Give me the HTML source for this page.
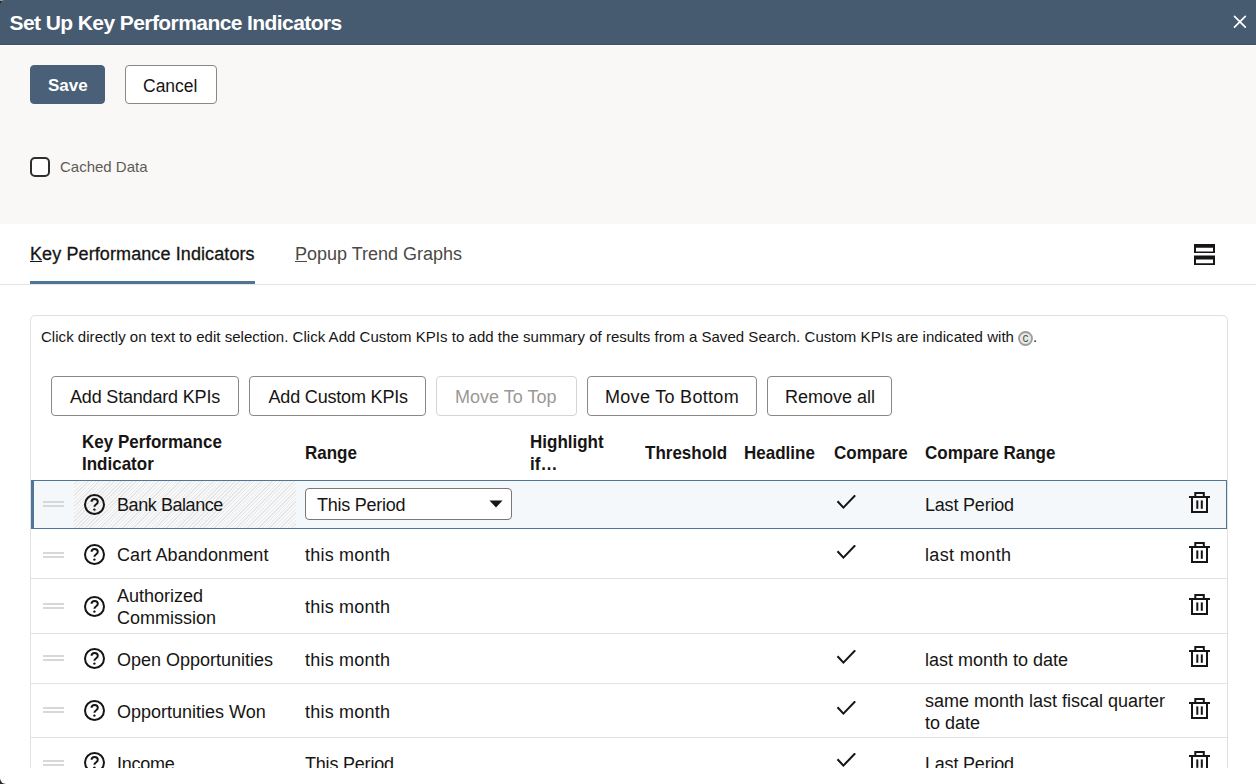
<!DOCTYPE html>
<html><head><meta charset="utf-8">
<style>
html,body{margin:0;padding:0;}
body{width:1256px;height:784px;overflow:hidden;position:relative;background:#fff;font-family:"Liberation Sans",sans-serif;color:#161513;}
.a{position:absolute;}
.t{position:absolute;white-space:nowrap;line-height:22px;font-size:18px;}
.b{font-weight:700;}
#hdr{left:0;top:0;width:1256px;height:44px;background:#465a70;}
#top{left:0;top:46px;width:1256px;height:178px;background:#f9f8f6;}
.btn{position:absolute;box-sizing:border-box;border:1px solid #8a8886;border-radius:4px;background:#fff;}
.dis{border-color:#d6d4d2;}
.hl{position:absolute;left:30px;height:1px;background:#e2e2e2;}
.handle{position:absolute;left:43px;width:21px;height:6px;border-top:2px solid #d8d8d8;border-bottom:2px solid #d8d8d8;box-sizing:border-box;}
.q{position:absolute;left:84px;width:21px;height:21px;}
.tr{position:absolute;left:1189px;width:22px;height:22px;}
.ck{position:absolute;left:834px;width:24px;height:16px;}
</style></head>
<body>
<div class="a" style="left:0;top:0;width:7px;height:7px;background:linear-gradient(#a29c92 0,#a29c92 1px,#1f1d1b 1px,#1f1d1b 4px,#6c7f92 4px);"></div>
<div id="hdr" class="a" style="border-top-left-radius:5px;"></div>
<div class="t b" style="left:9.5px;top:11px;font-size:21px;line-height:24px;letter-spacing:-0.58px;color:#fff;">Set Up Key Performance Indicators</div>
<svg class="a" style="left:1232px;top:14px" width="16" height="16" viewBox="0 0 16 16"><path d="M2.5 2.4L13.3 13.2M13.3 2.4L2.5 13.2" stroke="#fff" stroke-width="1.7" stroke-linecap="round"/></svg>

<div id="top" class="a"></div>
<div class="a" style="left:0;top:44px;width:1256px;height:1px;background:#3b4f66;"></div>
<div class="a" style="left:0;top:45px;width:1256px;height:1px;background:#fff;"></div>
<div class="btn" style="left:30px;top:65px;width:75px;height:39px;background:#4a6079;border-color:#4a6079;"></div>
<div class="t b" style="left:48px;top:75px;font-size:17px;color:#fff;">Save</div>
<div class="btn" style="left:125px;top:65px;width:92px;height:39px;"></div>
<div class="t" style="left:143px;top:75px;font-size:17.5px;">Cancel</div>

<div class="a" style="left:30px;top:157px;width:20px;height:20px;box-sizing:border-box;border:2px solid #2e2e2e;border-radius:5px;background:#fff;"></div>
<div class="t" style="left:60px;top:157px;font-size:15px;line-height:20px;color:#5f5b57;">Cached Data</div>

<!-- tabs -->
<div class="t" style="left:30px;top:243px;letter-spacing:0.1px;-webkit-text-stroke:0.3px #161513;"><u style="text-decoration-thickness:1px;text-underline-offset:1px">K</u>ey Performance Indicators</div>
<div class="a" style="left:30px;top:281px;width:225px;height:3px;background:#4f7494;"></div>
<div class="t" style="left:295px;top:243px;color:#4b4845;"><u style="text-decoration-thickness:1px;text-underline-offset:1px">P</u>opup Trend Graphs</div>
<div class="a" style="left:0;top:284px;width:1256px;height:1px;background:#e4e4e4;"></div>
<svg class="a" style="left:1194px;top:244px" width="21" height="21" viewBox="0 0 21 21">
<path d="M0 0h21v9H0z M2 3.8v3.8h17V3.8z" fill="#161513" fill-rule="evenodd"/>
<path d="M0 11.5h21v9.5H0z M2 15.5v3.7h17v-3.7z" fill="#161513" fill-rule="evenodd"/>
</svg>

<!-- panel -->
<div class="a" style="left:30px;top:315px;width:1198px;height:470px;box-sizing:border-box;border:1px solid #e1e1e1;border-radius:5px;"></div>
<div class="t" style="left:41px;top:327px;font-size:15px;line-height:20px;letter-spacing:0.035px;">Click directly on text to edit selection. Click Add Custom KPIs to add the summary of results from a Saved Search. Custom KPIs are indicated with</div>
<svg class="a" style="left:1018px;top:331px" width="15" height="15" viewBox="0 0 15 15"><circle cx="7.5" cy="7.5" r="6.5" fill="#e9e9e9" stroke="#9c9c9c" stroke-width="1.8"/><text x="7.5" y="11.4" font-family="Liberation Sans" font-size="12" font-weight="400" text-anchor="middle" fill="#4f5548">c</text></svg>
<div class="t" style="left:1033px;top:327px;font-size:15px;line-height:20px;">.</div>

<div class="btn" style="left:51px;top:376px;width:188px;height:40px;"></div>
<div class="t" style="left:70px;top:386px;letter-spacing:-0.18px;">Add Standard KPIs</div>
<div class="btn" style="left:249px;top:376px;width:177px;height:40px;"></div>
<div class="t" style="left:268.5px;top:386px;letter-spacing:-0.18px;">Add Custom KPIs</div>
<div class="btn dis" style="left:436px;top:376px;width:141px;height:40px;"></div>
<div class="t" style="left:455px;top:386px;color:#9b9896;">Move To Top</div>
<div class="btn" style="left:587px;top:376px;width:170px;height:40px;"></div>
<div class="t" style="left:605px;top:386px;letter-spacing:0.3px;">Move To Bottom</div>
<div class="btn" style="left:767px;top:376px;width:125px;height:40px;"></div>
<div class="t" style="left:785px;top:386px;">Remove all</div>

<!-- table header -->
<div class="t b" style="left:82px;top:433px;font-size:17px;line-height:20.4px;transform:scaleY(1.08);transform-origin:0 16.1px;">Key Performance<br>Indicator</div>
<div class="t b" style="left:305px;top:442.5px;font-size:17px;transform:scaleY(1.08);transform-origin:0 16.9px;">Range</div>
<div class="t b" style="left:530px;top:433px;font-size:17px;line-height:20.4px;transform:scaleY(1.08);transform-origin:0 16.1px;">Highlight<br>if…</div>
<div class="t b" style="left:645px;top:442.5px;font-size:17px;transform:scaleY(1.08);transform-origin:0 16.9px;">Threshold</div>
<div class="t b" style="left:744px;top:442.5px;font-size:17px;transform:scaleY(1.08);transform-origin:0 16.9px;">Headline</div>
<div class="t b" style="left:834px;top:442.5px;font-size:17px;transform:scaleY(1.08);transform-origin:0 16.9px;">Compare</div>
<div class="t b" style="left:925px;top:442.5px;font-size:17px;transform:scaleY(1.08);transform-origin:0 16.9px;">Compare Range</div>

<!-- rows -->
<div class="a" style="left:31px;top:480px;width:1196px;height:49px;box-sizing:border-box;border:1px solid #4f7597;border-left:3px solid #4f7597;background:#f5f8fb;"></div>
<div class="a" style="left:74px;top:481px;width:222px;height:47px;background:repeating-linear-gradient(-45deg,#e7e7e7 0px,#e7e7e7 1px,#f7f8f9 1px,#f7f8f9 2.6px);"></div>
<div class="a" style="left:305px;top:488px;width:207px;height:32px;box-sizing:border-box;border:1px solid #7a7875;border-radius:4px;background:#fff;"></div>
<div class="t" style="left:317px;top:494px;letter-spacing:-0.25px;">This Period</div>
<svg class="a" style="left:489px;top:500px" width="14" height="8" viewBox="0 0 14 8"><path d="M0.5 0.5h13L7 7.5z" fill="#161513"/></svg>

<div class="hl" style="top:578px;width:1197px;"></div>
<div class="hl" style="top:633px;width:1197px;"></div>
<div class="hl" style="top:683px;width:1197px;"></div>
<div class="hl" style="top:737px;width:1197px;"></div>

<div class="handle" style="top:501px;"></div>
<div class="handle" style="top:552px;"></div>
<div class="handle" style="top:603px;"></div>
<div class="handle" style="top:655px;"></div>
<div class="handle" style="top:707px;"></div>
<div class="handle" style="top:760px;"></div>

<!-- KPI names -->
<div class="t" style="left:117px;top:494px;letter-spacing:-0.43px;">Bank Balance</div>
<div class="t" style="left:117px;top:544px;letter-spacing:0.09px;">Cart Abandonment</div>
<div class="t" style="left:117px;top:585px;">Authorized<br>Commission</div>
<div class="t" style="left:117px;top:649px;">Open Opportunities</div>
<div class="t" style="left:117px;top:701px;">Opportunities Won</div>
<div class="t" style="left:117px;top:753px;letter-spacing:-0.25px;">Income</div>

<div class="t" style="left:305px;top:544px;letter-spacing:0.22px;">this month</div>
<div class="t" style="left:305px;top:596px;letter-spacing:0.22px;">this month</div>
<div class="t" style="left:305px;top:649px;letter-spacing:0.22px;">this month</div>
<div class="t" style="left:305px;top:701px;letter-spacing:0.22px;">this month</div>
<div class="t" style="left:305px;top:753px;letter-spacing:-0.2px;">This Period</div>

<div class="t" style="left:925px;top:494px;letter-spacing:-0.2px;">Last Period</div>
<div class="t" style="left:925px;top:544px;letter-spacing:0.33px;">last month</div>
<div class="t" style="left:925px;top:649px;">last month to date</div>
<div class="t" style="left:925px;top:690px;">same month last fiscal quarter<br>to date</div>
<div class="t" style="left:925px;top:753px;letter-spacing:-0.2px;">Last Period</div>

<!-- icons -->
<svg class="q" style="top:493.9px" viewBox="0 0 21 21"><circle cx="10.5" cy="10.5" r="9.5" fill="none" stroke="#161513" stroke-width="2"/><path d="M7.5 7.8C7.6 6 8.9 4.9 10.6 4.9C12.4 4.9 13.8 6.1 13.8 7.7C13.8 9 13 9.8 11.9 10.5C11 11.1 10.4 11.7 10.4 12.7" fill="none" stroke="#161513" stroke-width="2"/><circle cx="10.4" cy="15.6" r="1.2" fill="#161513"/></svg>
<svg class="q" style="top:543.5px" viewBox="0 0 21 21"><circle cx="10.5" cy="10.5" r="9.5" fill="none" stroke="#161513" stroke-width="2"/><path d="M7.5 7.8C7.6 6 8.9 4.9 10.6 4.9C12.4 4.9 13.8 6.1 13.8 7.7C13.8 9 13 9.8 11.9 10.5C11 11.1 10.4 11.7 10.4 12.7" fill="none" stroke="#161513" stroke-width="2"/><circle cx="10.4" cy="15.6" r="1.2" fill="#161513"/></svg>
<svg class="q" style="top:595.9px" viewBox="0 0 21 21"><circle cx="10.5" cy="10.5" r="9.5" fill="none" stroke="#161513" stroke-width="2"/><path d="M7.5 7.8C7.6 6 8.9 4.9 10.6 4.9C12.4 4.9 13.8 6.1 13.8 7.7C13.8 9 13 9.8 11.9 10.5C11 11.1 10.4 11.7 10.4 12.7" fill="none" stroke="#161513" stroke-width="2"/><circle cx="10.4" cy="15.6" r="1.2" fill="#161513"/></svg>
<svg class="q" style="top:648.0px" viewBox="0 0 21 21"><circle cx="10.5" cy="10.5" r="9.5" fill="none" stroke="#161513" stroke-width="2"/><path d="M7.5 7.8C7.6 6 8.9 4.9 10.6 4.9C12.4 4.9 13.8 6.1 13.8 7.7C13.8 9 13 9.8 11.9 10.5C11 11.1 10.4 11.7 10.4 12.7" fill="none" stroke="#161513" stroke-width="2"/><circle cx="10.4" cy="15.6" r="1.2" fill="#161513"/></svg>
<svg class="q" style="top:699.9px" viewBox="0 0 21 21"><circle cx="10.5" cy="10.5" r="9.5" fill="none" stroke="#161513" stroke-width="2"/><path d="M7.5 7.8C7.6 6 8.9 4.9 10.6 4.9C12.4 4.9 13.8 6.1 13.8 7.7C13.8 9 13 9.8 11.9 10.5C11 11.1 10.4 11.7 10.4 12.7" fill="none" stroke="#161513" stroke-width="2"/><circle cx="10.4" cy="15.6" r="1.2" fill="#161513"/></svg>
<svg class="q" style="top:752.0px" viewBox="0 0 21 21"><circle cx="10.5" cy="10.5" r="9.5" fill="none" stroke="#161513" stroke-width="2"/><path d="M7.5 7.8C7.6 6 8.9 4.9 10.6 4.9C12.4 4.9 13.8 6.1 13.8 7.7C13.8 9 13 9.8 11.9 10.5C11 11.1 10.4 11.7 10.4 12.7" fill="none" stroke="#161513" stroke-width="2"/><circle cx="10.4" cy="15.6" r="1.2" fill="#161513"/></svg>
<svg class="ck" style="top:495.1px" viewBox="0 0 24 16"><path d="M3.5 6.3L9.4 12.6L21.2 0.3" fill="none" stroke="#161513" stroke-width="2.05"/></svg>
<svg class="ck" style="top:545.0px" viewBox="0 0 24 16"><path d="M3.5 6.3L9.4 12.6L21.2 0.3" fill="none" stroke="#161513" stroke-width="2.05"/></svg>
<svg class="ck" style="top:649.5px" viewBox="0 0 24 16"><path d="M3.5 6.3L9.4 12.6L21.2 0.3" fill="none" stroke="#161513" stroke-width="2.05"/></svg>
<svg class="ck" style="top:701.0px" viewBox="0 0 24 16"><path d="M3.5 6.3L9.4 12.6L21.2 0.3" fill="none" stroke="#161513" stroke-width="2.05"/></svg>
<svg class="ck" style="top:753.0px" viewBox="0 0 24 16"><path d="M3.5 6.3L9.4 12.6L21.2 0.3" fill="none" stroke="#161513" stroke-width="2.05"/></svg>
<svg class="tr" style="top:492.0px" viewBox="0 0 22 22"><path d="M6.3 5V1h8.5v4M3 6v14h15V6" fill="none" stroke="#161513" stroke-width="2"/><rect x="0" y="4" width="21" height="2" fill="#161513"/><rect x="7.3" y="8.4" width="2" height="8.4" fill="#161513"/><rect x="11.8" y="8.4" width="2" height="8.4" fill="#161513"/></svg>
<svg class="tr" style="top:542.0px" viewBox="0 0 22 22"><path d="M6.3 5V1h8.5v4M3 6v14h15V6" fill="none" stroke="#161513" stroke-width="2"/><rect x="0" y="4" width="21" height="2" fill="#161513"/><rect x="7.3" y="8.4" width="2" height="8.4" fill="#161513"/><rect x="11.8" y="8.4" width="2" height="8.4" fill="#161513"/></svg>
<svg class="tr" style="top:594.0px" viewBox="0 0 22 22"><path d="M6.3 5V1h8.5v4M3 6v14h15V6" fill="none" stroke="#161513" stroke-width="2"/><rect x="0" y="4" width="21" height="2" fill="#161513"/><rect x="7.3" y="8.4" width="2" height="8.4" fill="#161513"/><rect x="11.8" y="8.4" width="2" height="8.4" fill="#161513"/></svg>
<svg class="tr" style="top:646.0px" viewBox="0 0 22 22"><path d="M6.3 5V1h8.5v4M3 6v14h15V6" fill="none" stroke="#161513" stroke-width="2"/><rect x="0" y="4" width="21" height="2" fill="#161513"/><rect x="7.3" y="8.4" width="2" height="8.4" fill="#161513"/><rect x="11.8" y="8.4" width="2" height="8.4" fill="#161513"/></svg>
<svg class="tr" style="top:698.0px" viewBox="0 0 22 22"><path d="M6.3 5V1h8.5v4M3 6v14h15V6" fill="none" stroke="#161513" stroke-width="2"/><rect x="0" y="4" width="21" height="2" fill="#161513"/><rect x="7.3" y="8.4" width="2" height="8.4" fill="#161513"/><rect x="11.8" y="8.4" width="2" height="8.4" fill="#161513"/></svg>
<svg class="tr" style="top:750.5px" viewBox="0 0 22 22"><path d="M6.3 5V1h8.5v4M3 6v14h15V6" fill="none" stroke="#161513" stroke-width="2"/><rect x="0" y="4" width="21" height="2" fill="#161513"/><rect x="7.3" y="8.4" width="2" height="8.4" fill="#161513"/><rect x="11.8" y="8.4" width="2" height="8.4" fill="#161513"/></svg>
<!-- bottom cover -->
<div class="a" style="left:0;top:777px;width:7px;height:7px;background:#2a2a2a;"></div>
<div class="a" style="left:0;top:768px;width:1256px;height:16px;background:#fff;border-bottom-left-radius:6px;"></div>
</body></html>
